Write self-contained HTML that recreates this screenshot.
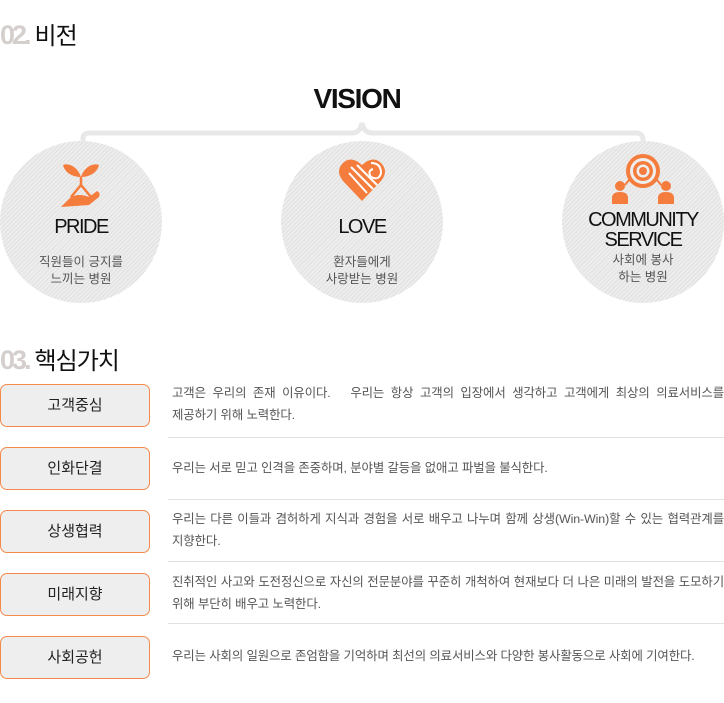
<!DOCTYPE html>
<html><head><meta charset="utf-8"><style>
*{margin:0;padding:0;box-sizing:border-box}
body{width:724px;height:703px;background:#fff;font-family:"Liberation Sans","Noto Sans CJK KR",sans-serif;position:relative;overflow:hidden;color:#222}
.h{position:absolute;left:0;font-size:24px;color:#111;letter-spacing:-1px}
.h b{font-weight:bold;color:#d4cfcc;font-size:27px;letter-spacing:-3px;margin-right:6px}
.vision{position:absolute;left:300px;top:83px;width:114px;text-align:center;font-weight:bold;font-size:28px;letter-spacing:-1.3px;color:#111}
.c{position:absolute;top:141px;width:162px;height:162px;border-radius:50%;background:repeating-linear-gradient(135deg,#eeeded 0 2px,#e3e1df 2px 3px);text-align:center}
.c .t{position:absolute;left:0;right:0;top:76px;font-size:20px;color:#111;letter-spacing:-1.5px;line-height:20px}
.c .d{position:absolute;left:0;right:0;top:113px;font-size:12.5px;color:#555;line-height:17px}
.c svg{position:absolute;left:50%;transform:translateX(-50%)}
.box{position:absolute;left:0;width:150px;height:43px;border:1px solid #f48a4c;border-radius:7px;background:#efeeee;text-align:center;line-height:41px;font-size:15px;color:#222}
.tx{position:absolute;left:172px;width:552px;font-size:12.4px;color:#555;line-height:22px;text-align:justify;word-break:keep-all;letter-spacing:-0.1px}
.l{display:block;text-align:justify;text-align-last:justify;white-space:nowrap}
.sep{position:absolute;left:168px;width:556px;height:1px;background:#e2e2e2}
</style></head><body>
<div class="h" style="top:16px"><b>02.</b>비전</div>
<div class="vision">VISION</div>
<svg style="position:absolute;left:0;top:110px" width="724" height="40">
<path d="M83 32 V28 Q83 23 90 23 H352 Q360 23 362 13 Q364 23 372 23 H636 Q643 23 643 30 V32" fill="none" stroke="#e8e8e8" stroke-width="5"/>
</svg>
<div class="c" style="left:0">
<svg style="top:16px" width="44" height="52" viewBox="0 0 44 52"><path d="M22 20 C18 8 8 6 4 8 C6 16 14 20 22 20Z M22 20 C26 8 36 6 40 8 C38 16 30 20 22 20Z" fill="#f47c3c"/><path d="M22 20 L22 28 L12 40 M22 28 L32 40" stroke="#f47c3c" stroke-width="2.5" fill="none"/><path d="M2 50 L12 40 Q20 36 30 40 L38 34 Q42 36 40 40 L30 48 Z" fill="#f47c3c"/></svg>
<div class="t">PRIDE</div><div class="d">직원들이 긍지를<br>느끼는 병원</div></div>
<div class="c" style="left:281px">
<svg style="top:14px" width="50" height="48" viewBox="0 0 50 48"><path d="M25 46 L6 26 Q-2 16 6 8 Q14 0 25 10 Q36 0 44 8 Q52 16 44 26Z" fill="#f47c3c"/><path d="M12 18 L30 38 M14 12 L36 34 M20 10 L40 30 M34 8 Q44 8 44 18 Q42 26 34 22 Q30 16 36 14" stroke="#fff" stroke-width="2" fill="none"/></svg>
<div class="t">LOVE</div><div class="d">환자들에게<br>사랑받는 병원</div></div>
<div class="c" style="left:562px">
<svg style="top:12px" width="66" height="52" viewBox="0 0 66 52"><circle cx="33" cy="18" r="17" fill="#f47c3c"/><circle cx="33" cy="18" r="13" fill="#eee"/><circle cx="33" cy="18" r="10" fill="#f47c3c"/><circle cx="33" cy="18" r="6.5" fill="#eee"/><circle cx="33" cy="18" r="4" fill="#f47c3c"/><circle cx="10" cy="33" r="5" fill="#f47c3c"/><circle cx="56" cy="33" r="5" fill="#f47c3c"/><path d="M2 51 V45 Q2 39 10 39 Q18 39 18 45 V51Z M48 51 V45 Q48 39 56 39 Q64 39 64 45 V51Z" fill="#f47c3c"/><path d="M15 32 Q18 28 20 26 M51 32 Q48 28 46 26" stroke="#f47c3c" stroke-width="2" fill="none"/></svg>
<div class="t" style="top:69px;line-height:20px">COMMUNITY<br>SERVICE</div><div class="d" style="top:111px">사회에 봉사<br>하는 병원</div></div>
<div class="h" style="top:341px"><b>03.</b>핵심가치</div>
<div class="box" style="top:384px">고객중심</div>
<div class="tx" style="top:382px"><span class="l">고객은 우리의 존재 이유이다.&nbsp;&nbsp; 우리는 항상 고객의 입장에서 생각하고 고객에게 최상의 의료서비스를</span>제공하기 위해 노력한다.</div>
<div class="sep" style="top:437px"></div>
<div class="box" style="top:447px">인화단결</div>
<div class="tx" style="top:457px">우리는 서로 믿고 인격을 존중하며, 분야별 갈등을 없애고 파벌을 불식한다.</div>
<div class="sep" style="top:499px"></div>
<div class="box" style="top:510px">상생협력</div>
<div class="tx" style="top:508px"><span class="l">우리는 다른 이들과 겸허하게 지식과 경험을 서로 배우고 나누며 함께 상생(Win-Win)할 수 있는 협력관계를</span>지향한다.</div>
<div class="sep" style="top:561px"></div>
<div class="box" style="top:573px">미래지향</div>
<div class="tx" style="top:571px"><span class="l">진취적인 사고와 도전정신으로 자신의 전문분야를 꾸준히 개척하여 현재보다 더 나은 미래의 발전을 도모하기</span>위해 부단히 배우고 노력한다.</div>
<div class="sep" style="top:623px"></div>
<div class="box" style="top:636px">사회공헌</div>
<div class="tx" style="top:645px">우리는 사회의 일원으로 존엄함을 기억하며 최선의 의료서비스와 다양한 봉사활동으로 사회에 기여한다.</div>
</body></html>
